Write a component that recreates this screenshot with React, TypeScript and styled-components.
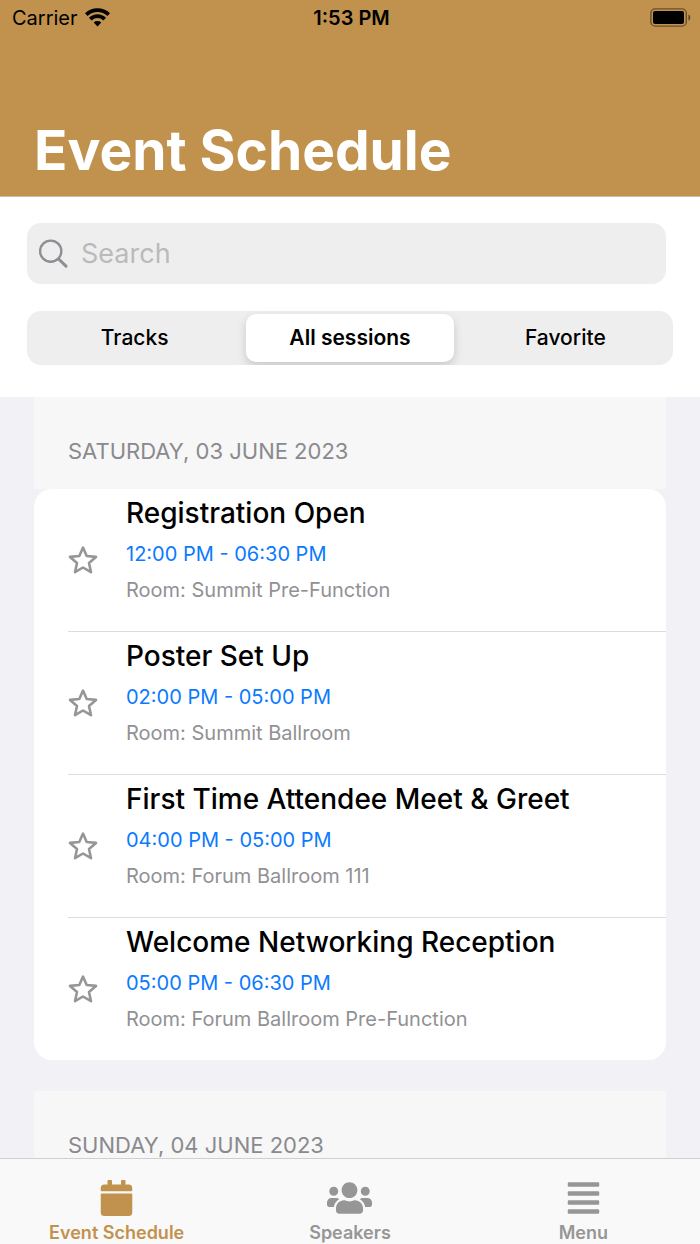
import React, { useState } from 'react';
import styled, { createGlobalStyle } from 'styled-components';
import { FaAlignJustify, FaCalendar, FaUsers } from 'react-icons/fa';

const GlobalStyle = createGlobalStyle`
  * { box-sizing: border-box; }
  body {
    margin: 0;
    background: #f2f1f6;
    color: #000;
    font-family: Inter, "Liberation Sans", sans-serif;
  }
  button, input { font: inherit; color: inherit; }
`;

const Screen = styled.div`
  display: flex;
  flex-direction: column;
  height: 100vh;
`;

const Header = styled.header`
  flex: none;
  background: #c1924e;
  border-bottom: 1px solid #cdbba4;
`;

const StatusBar = styled.div`
  display: grid;
  grid-template-columns: 1fr auto 1fr;
  align-items: center;
  height: 35px;
  padding: 0 9px 0 12px;
  font-size: 20px;
  line-height: 24px;
`;

const Carrier = styled.span`
  display: flex;
  align-items: center;
  gap: 7px;
`;

const Clock = styled.time`
  font-weight: 600;
`;

const Battery = styled.svg`
  justify-self: end;
`;

const Title = styled.h1`
  margin: 0;
  padding: 81px 34px 12px;
  color: #fff;
  font-size: 55px;
  font-weight: 700;
  line-height: 68px;
`;

const Filters = styled.section`
  flex: none;
  padding: 26px 27px 32px;
  background: #fff;
`;

const SearchField = styled.label`
  display: flex;
  align-items: center;
  gap: 12px;
  height: 61px;
  margin-right: 7px;
  padding: 0 12px;
  border-radius: 14px;
  background: #eee;
`;

const SearchInput = styled.input`
  flex: 1;
  min-width: 0;
  padding: 0;
  border: 0;
  outline: 0;
  background: none;
  font-size: 27px;
  line-height: 34px;
  &::placeholder { color: #bababc; opacity: 1; }
`;

const Segments = styled.div`
  display: grid;
  grid-template-columns: repeat(3, 1fr);
  gap: 8px;
  height: 54px;
  margin-top: 27px;
  padding: 3px 4px;
  border-radius: 14px;
  background: #eee;
  overflow: hidden;
`;

const Segment = styled.button<{ $active: boolean }>`
  padding: 0;
  border: 0;
  border-radius: 10px;
  background: ${(p) => (p.$active ? '#fff' : 'transparent')};
  box-shadow: ${(p) => (p.$active ? '0 4px 10px rgba(0, 0, 0, 0.16)' : 'none')};
  font-size: 21px;
  font-weight: ${(p) => (p.$active ? 600 : 500)};
  line-height: 26px;
`;

const Sessions = styled.main`
  flex: 1;
  min-height: 0;
  padding: 0 34px;
  overflow-y: auto;
  scrollbar-width: none;
`;

const Day = styled.section`
  margin-bottom: 31px;
`;

const DayHeading = styled.h2`
  margin: 0;
  padding: 40px 34px 24px;
  background: #f7f7f7;
  color: #8a8a8e;
  font-size: 22px;
  font-weight: 400;
  line-height: 28px;
  text-transform: uppercase;
`;

const SessionList = styled.ul`
  margin: 0;
  padding: 0 0 0 34px;
  border-radius: 18px;
  background: #fff;
  list-style: none;
`;

const SessionRow = styled.li`
  display: flex;
  align-items: center;
  gap: 28px;
  height: 143px;
  border-bottom: 1px solid #dcdcde;
  &:last-child { height: 142px; border-bottom: 0; }
`;

const StarButton = styled.button`
  display: flex;
  flex: none;
  padding: 0;
  border: 0;
  background: none;
  color: #969696;
`;

const SessionText = styled.div`
  align-self: flex-start;
  padding-top: 6px;
`;

const SessionTitle = styled.h3`
  margin: 0 0 9px;
  font-size: 28px;
  font-weight: 500;
  line-height: 36px;
`;

const SessionTime = styled.p`
  margin: 0 0 8px;
  color: #0a7aff;
  font-size: 20px;
  line-height: 28px;
`;

const SessionRoom = styled(SessionTime)`
  margin: 0;
  color: #919194;
`;

const TabBar = styled.nav`
  display: grid;
  flex: none;
  grid-template-columns: repeat(3, 1fr);
  height: 86px;
  border-top: 1px solid #cfcfcf;
  background: #f9f9f9;
`;

const Tab = styled.a<{ $active?: boolean }>`
  display: flex;
  flex-direction: column;
  align-items: center;
  gap: 6px;
  padding-top: 21px;
  color: ${(p) => (p.$active ? '#c1924e' : '#969696')};
  font-size: 18px;
  font-weight: 600;
  line-height: 22px;
  text-decoration: none;
  svg { flex: none; width: 45px; height: 36px; }
`;

const WifiIcon = () => (
  <svg width="25" height="19" viewBox="0 0 25 19" aria-hidden="true">
    <g fill="none" stroke="#000" strokeWidth="3.8">
      <path d="M1.3 6.6A16.2 16.2 0 0 1 23.7 6.6" />
      <path d="M5.3 11.2A10.2 10.2 0 0 1 19.7 11.2" />
    </g>
    <path d="M8.7 14.6A5.6 5.6 0 0 1 16.3 14.6L12.5 18.4Z" />
  </svg>
);

const BatteryIcon = () => (
  <Battery width="41" height="19" viewBox="0 0 41 19" role="img" aria-label="Battery full">
    <rect x="0.9" y="0.9" width="35.4" height="17.2" rx="4.2" fill="none" stroke="#000" strokeOpacity="0.45" strokeWidth="1.4" />
    <rect x="3" y="3" width="31" height="13" rx="2" />
    <path d="M38.4 6.4c2.6 1 2.6 5.2 0 6.2z" fillOpacity="0.5" />
  </Battery>
);

const SearchIcon = () => (
  <svg width="30" height="30" viewBox="0 0 30 30" fill="none" stroke="#8e8e93" aria-hidden="true">
    <circle cx="11.7" cy="12.2" r="10.6" strokeWidth="2.4" />
    <path d="M19.6 20L27 27.2" strokeWidth="3" strokeLinecap="round" />
  </svg>
);

const StarIcon = () => (
  <svg width="30" height="30" viewBox="0 0 30 30" fill="none" stroke="currentColor" strokeWidth="2.6" strokeLinejoin="round" aria-hidden="true">
    <path d="M15 2.6L18.7 11L28 11.9L21 18L23 27.2L15 22.5L7 27.2L9 18L2 11.9L11.3 11Z" />
  </svg>
);

const filters = ['Tracks', 'All sessions', 'Favorite'];

const saturday = [
  { title: 'Registration Open', time: '12:00 PM - 06:30 PM', room: 'Summit Pre-Function' },
  { title: 'Poster Set Up', time: '02:00 PM - 05:00 PM', room: 'Summit Ballroom' },
  { title: 'First Time Attendee Meet & Greet', time: '04:00 PM - 05:00 PM', room: 'Forum Ballroom 111' },
  { title: 'Welcome Networking Reception', time: '05:00 PM - 06:30 PM', room: 'Forum Ballroom Pre-Function' },
];

export default function App() {
  const [filter, setFilter] = useState('All sessions');

  return (
    <>
      <GlobalStyle />
      <Screen>
        <Header>
          <StatusBar>
            <Carrier>Carrier <WifiIcon /></Carrier>
            <Clock>1:53 PM</Clock>
            <BatteryIcon />
          </StatusBar>
          <Title>Event Schedule</Title>
        </Header>
        <Filters>
          <SearchField>
            <SearchIcon />
            <SearchInput type="text" placeholder="Search" aria-label="Search" />
          </SearchField>
          <Segments role="group" aria-label="Sessions shown">
            {filters.map((name) => (
              <Segment key={name} type="button" $active={name === filter} aria-pressed={name === filter} onClick={() => setFilter(name)}>
                {name}
              </Segment>
            ))}
          </Segments>
        </Filters>
        <Sessions>
          <Day>
            <DayHeading>Saturday, 03 June 2023</DayHeading>
            <SessionList>
              {saturday.map((s) => (
                <SessionRow key={s.title}>
                  <StarButton type="button" aria-label={`Add ${s.title} to favorites`}>
                    <StarIcon />
                  </StarButton>
                  <SessionText>
                    <SessionTitle>{s.title}</SessionTitle>
                    <SessionTime>{s.time}</SessionTime>
                    <SessionRoom>Room: {s.room}</SessionRoom>
                  </SessionText>
                </SessionRow>
              ))}
            </SessionList>
          </Day>
          <Day>
            <DayHeading>Sunday, 04 June 2023</DayHeading>
          </Day>
        </Sessions>
        <TabBar>
          <Tab href="#schedule" $active aria-current="page"><FaCalendar />Event Schedule</Tab>
          <Tab href="#speakers"><FaUsers />Speakers</Tab>
          <Tab href="#menu"><FaAlignJustify />Menu</Tab>
        </TabBar>
      </Screen>
    </>
  );
}
